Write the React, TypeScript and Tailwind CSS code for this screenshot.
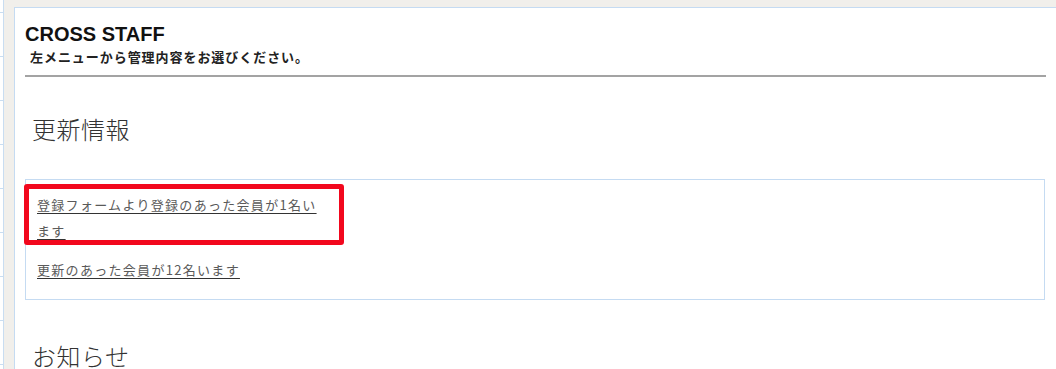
const jp = "font-['Noto_Sans_CJK_JP','Noto_Sans',sans-serif]";

const updates = [
  { text: '登録フォームより登録のあった会員が1名います', marked: true },
  { text: '更新のあった会員が12名います', marked: false },
];

function Sidebar() {
  return (
    <div className="w-[4px] shrink-0 bg-white border-r border-[#c9ddf1]">
      {Array.from({ length: 9 }).map((_, i) => (
        <div key={i} className={i === 0 ? 'h-[13px] border-b border-[#c9ddf1]' : 'h-[44px] border-b border-[#c9ddf1]'} />
      ))}
    </div>
  );
}

export default function App() {
  return (
    <div className="flex h-[369px] overflow-hidden bg-[#f1efeb]">
      <Sidebar />
      <main className="ml-[10px] mt-[7px] flex-1 bg-white border-l border-t border-[#c5dbf2] pl-[10px] pr-[10px] pt-[15px]">
        <h1 className="font-['Liberation_Sans',Arial,sans-serif] text-[20px] leading-[22px] font-bold text-[#111]">
          CROSS STAFF
        </h1>
        <p className={`${jp} mt-[3px] pl-[5px] text-[13px] leading-[18px] font-bold tracking-[0.95px] text-[#222]`}>
          左メニューから管理内容をお選びください。
        </p>
        <hr className="mt-[9px] border-0 h-[2px] bg-[#a3a3a3]" />

        <h2 className={`${jp} mt-[34px] pl-[7px] text-[24px] leading-[36px] tracking-[0.5px] font-light text-[#333]`}>更新情報</h2>

        <ul className={`${jp} mt-[32px] border border-[#c5dbf2] pl-[11px] pt-[11px] pb-[17px] mr-[1px]`}>
          {updates.map((u, i) => (
            <li key={i} className={`relative w-[290px] ${i > 0 ? 'mt-[13px]' : ''}`}>
              <a
                href="#"
                className="text-[13px] leading-[25px] tracking-[1.3px] text-[#5a5a5a] underline decoration-[#333] underline-offset-[3px]"
              >
                {u.text}
              </a>
              {u.marked && (
                <span className="pointer-events-none absolute left-[-13px] top-[-7px] h-[61px] w-[320px] rounded-[3px] border-[5px] border-[#f2071d]" />
              )}
            </li>
          ))}
        </ul>

        <h2 className={`${jp} mt-[38px] pl-[7px] text-[24px] leading-[36px] tracking-[0.5px] font-light text-[#333]`}>お知らせ</h2>
      </main>
    </div>
  );
}
